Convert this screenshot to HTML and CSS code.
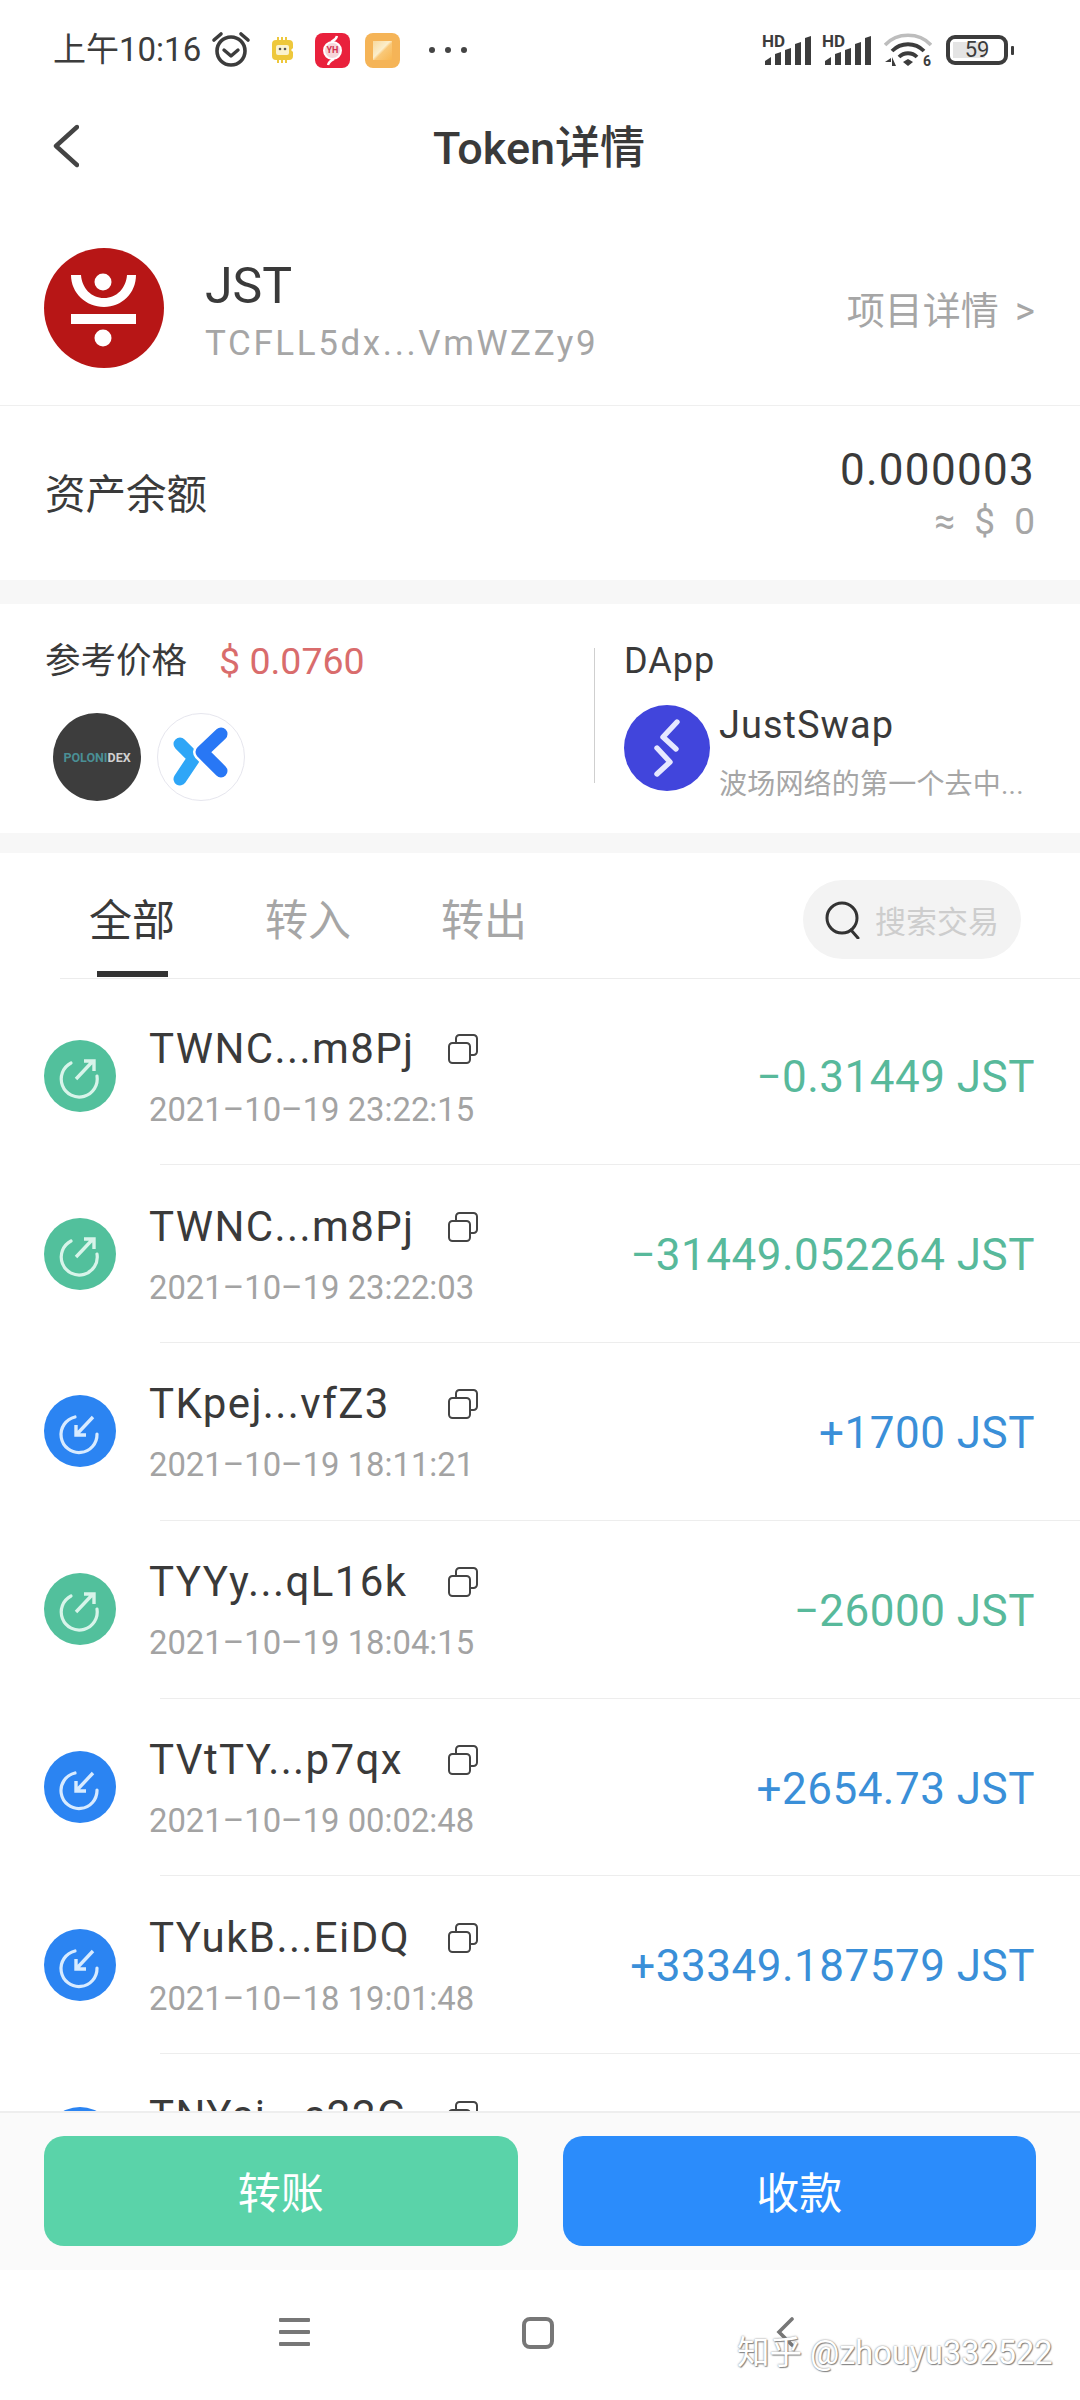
FILE: index.html
```html
<!DOCTYPE html>
<html lang="zh-CN">
<head>
<meta charset="UTF-8"/>
<meta name="viewport" content="width=device-width, initial-scale=1.0"/>
<title>Token详情</title>
<link rel="stylesheet" href="styles.css">
</head>
<body>
<div class="page">

    <!-- status bar -->
    <div class="status">
        <span class="time">上午10:16</span>
        <svg class="ic-alarm" viewBox="0 0 40 36" fill="none" stroke="#3c3c3c">
            <circle cx="20" cy="20" r="14" stroke-width="3.6"/>
            <path d="M13 19l7 6 7-6" stroke-width="3.4" stroke-linecap="round" stroke-linejoin="round"/>
            <path d="M3 9l7-6M37 9l-7-6" stroke-width="3.6" stroke-linecap="round"/>
        </svg>
        <svg class="ic-chip" viewBox="0 0 24 26">
            <path d="M6 0h2v3h2V0h2v3h2V0h2v3h2a4 4 0 0 1 4 4v4l-2 2 2 2v4a4 4 0 0 1-4 4h-2v3h-2v-3h-2v3h-2v-3H8v3H6v-3H5a4 4 0 0 1-4-4V7a4 4 0 0 1 4-4h1z" fill="#eec83c"/>
            <rect x="5" y="8" width="13" height="10" rx="2" fill="#fbf3cf"/>
            <circle cx="9" cy="12" r="1.3" fill="#555"/><circle cx="14" cy="12" r="1.3" fill="#555"/>
        </svg>
        <div class="ic-app ic-app-red">
            <svg class="ic-app-art" viewBox="0 0 35 35">
                <circle cx="17.5" cy="17.5" r="8.5" fill="#f6d5da" stroke="#fff" stroke-width="2"/>
                <path d="M22 3c-1 4-4 5-6 6M13 32c1-4 4-5 6-6" stroke="#fff" stroke-width="2.4" fill="none"/>
            </svg>
            <span class="ic-yh">YH</span>
        </div>
        <svg class="ic-app ic-app-last" viewBox="0 0 35 35">
            <defs>
                <linearGradient id="noteFill" x1="0" y1="0" x2="1" y2="1">
                    <stop offset="0" stop-color="#f8d99c"/><stop offset="0.45" stop-color="#fbeecb"/><stop offset="0.55" stop-color="#f9c878"/><stop offset="1" stop-color="#f8b650"/>
                </linearGradient>
            </defs>
            <rect width="35" height="35" rx="8" fill="#f5b457"/>
            <rect x="8" y="8" width="19" height="19" fill="url(#noteFill)"/>
        </svg>
        <span class="dots"><i></i><i></i><i></i></span>

        <div class="status-right">
            <div class="signal">
                <span class="signal-hd">HD</span>
                <svg class="signal-bars" viewBox="0 0 50 32">
                    <path d="M3 31v-4l6-4v8zM13 31V20l6-2v13zM23 31V16l6-2v17zM33 31V10l6-2v23zM43 31V4l6-2v29z" fill="#3c3c3c"/>
                </svg>
            </div>
            <div class="signal">
                <span class="signal-hd">HD</span>
                <svg class="signal-bars" viewBox="0 0 50 32">
                    <path d="M3 31v-4l6-4v8zM13 31V20l6-2v13zM23 31V16l6-2v17zM33 31V10l6-2v23zM43 31V4l6-2v29z" fill="#3c3c3c"/>
                </svg>
            </div>
            <div class="wifi">
                <svg class="wifi-art" viewBox="0 0 48 34" fill="none">
                    <path d="M1 12C13 -1 35 -1 47 12" stroke="#bdbdbd" stroke-width="3.6"/>
                    <path d="M8 18c9-9 23-9 32 0" stroke="#3c3c3c" stroke-width="3.8"/>
                    <path d="M15 24c5-5 13-5 18 0" stroke="#3c3c3c" stroke-width="3.8"/>
                    <path d="M19 29l5-3 5 3-5 4z" fill="#3c3c3c"/>
                    <path d="M1 29h6v-4zM8 33v-9l4 9z" fill="#3c3c3c"/>
                </svg>
                <span class="wifi-six">6</span>
            </div>
            <div class="battery">
                <div class="battery-box"><span class="battery-fill"></span><span class="battery-num">59</span></div>
                <span class="battery-nub"></span>
            </div>
        </div>
    </div>

    <!-- title -->
    <div class="nav">
        <svg class="nav-back" viewBox="0 0 26 44" fill="none" stroke="#444" stroke-width="4.4" stroke-linecap="round" stroke-linejoin="round">
            <path d="M24 3L3 22l21 19"/>
        </svg>
        <div class="nav-title">Token详情</div>
    </div>

    <!-- token -->
    <div class="token">
        <svg class="token-logo" viewBox="0 0 120 120">
            <circle cx="60" cy="60" r="60" fill="#b71616"/>
            <circle cx="59" cy="34" r="8.5" fill="#fff"/>
            <path d="M27 27H37C38 40 47 50 60 50C73 50 82 40 83 27H92C92 45 78 59 60 59C42 59 27 45 27 27Z" fill="#fff"/>
            <rect x="27" y="66" width="65" height="10" fill="#fff"/>
            <circle cx="59" cy="90" r="8.5" fill="#fff"/>
        </svg>
        <div class="token-info">
            <div class="token-name">JST</div>
            <div class="token-addr">TCFLL5dx...VmWZZy9</div>
        </div>
        <div class="token-link">项目详情 &gt;</div>
    </div>

    <div class="balance">
        <div class="balance-label">资产余额</div>
        <div class="balance-nums">
            <div class="balance-val">0.000003</div>
            <div class="balance-usd">≈ $ 0</div>
        </div>
    </div>

    <div class="gap gap-a"></div>

    <!-- price and dapp -->
    <div class="market">
        <div class="price">
            <div class="price-head"><span class="price-label">参考价格</span><span class="price-val">$ 0.0760</span></div>
            <div class="dex-list">
                <div class="dex dex-polo"><span class="polo-a">POLONI</span><span class="polo-b">DEX</span></div>
                <div class="dex dex-x">
                    <svg viewBox="0 0 88 88" fill="none" stroke-linecap="round" stroke-linejoin="round">
                        <path d="M23 31L37 45 23 66" stroke="#2ea6f7" stroke-width="13"/>
                        <path d="M64 21L45 39l19 19" stroke="#fff" stroke-width="18" stroke-linecap="butt"/>
                        <path d="M64 21L45 39l19 19" stroke="#2877f5" stroke-width="13"/>
                    </svg>
                </div>
            </div>
        </div>
        <div class="dapp">
            <div class="dapp-title">DApp</div>
            <div class="dapp-item">
                <svg class="dapp-logo" viewBox="0 0 86 86" fill="none" stroke="#e6e8ff" stroke-width="5.4" stroke-linecap="round" stroke-linejoin="round">
                    <circle cx="43" cy="43" r="43" fill="#4145dc" stroke="none"/>
                    <path d="M53 17L39 32l13 12"/>
                    <path d="M33 43l13 14-13 12"/>
                </svg>
                <div class="dapp-text">
                    <div class="dapp-name">JustSwap</div>
                    <div class="dapp-desc">波场网络的第一个去中...</div>
                </div>
            </div>
        </div>
    </div>

    <div class="gap gap-b"></div>

    <!-- tabs -->
    <div class="tabs">
        <div class="tab tab-on">全部<i class="tab-bar"></i></div>
        <div class="tab">转入</div>
        <div class="tab">转出</div>
        <div class="search">
            <svg class="search-ic" viewBox="0 0 38 38" fill="none" stroke="#333" stroke-width="3" stroke-linecap="round">
                <circle cx="18" cy="17" r="15"/>
                <path d="M27 29l7 8"/>
            </svg>
            <span class="search-txt">搜索交易</span>
        </div>
    </div>

    <!-- records -->
    <div class="list">
        <div class="row">
            <div class="row-main">
                <svg class="dir" viewBox="0 0 72 72"><use href="#dir-out"/></svg>
                <div class="row-info">
                    <div class="row-top"><span class="row-name">TWNC...m8Pj</span><svg class="copy" viewBox="0 0 30 30"><use href="#copy"/></svg></div>
                    <div class="row-date">2021–10–19 23:22:15</div>
                </div>
                <div class="amt amt-out">−0.31449 JST</div>
            </div>
        </div>
        <div class="row">
            <div class="row-main">
                <svg class="dir" viewBox="0 0 72 72"><use href="#dir-out"/></svg>
                <div class="row-info">
                    <div class="row-top"><span class="row-name">TWNC...m8Pj</span><svg class="copy" viewBox="0 0 30 30"><use href="#copy"/></svg></div>
                    <div class="row-date">2021–10–19 23:22:03</div>
                </div>
                <div class="amt amt-out">−31449.052264 JST</div>
            </div>
        </div>
        <div class="row">
            <div class="row-main">
                <svg class="dir" viewBox="0 0 72 72"><use href="#dir-in"/></svg>
                <div class="row-info">
                    <div class="row-top"><span class="row-name">TKpej...vfZ3</span><svg class="copy" viewBox="0 0 30 30"><use href="#copy"/></svg></div>
                    <div class="row-date">2021–10–19 18:11:21</div>
                </div>
                <div class="amt amt-in">+1700 JST</div>
            </div>
        </div>
        <div class="row">
            <div class="row-main">
                <svg class="dir" viewBox="0 0 72 72"><use href="#dir-out"/></svg>
                <div class="row-info">
                    <div class="row-top"><span class="row-name">TYYy...qL16k</span><svg class="copy" viewBox="0 0 30 30"><use href="#copy"/></svg></div>
                    <div class="row-date">2021–10–19 18:04:15</div>
                </div>
                <div class="amt amt-out">−26000 JST</div>
            </div>
        </div>
        <div class="row">
            <div class="row-main">
                <svg class="dir" viewBox="0 0 72 72"><use href="#dir-in"/></svg>
                <div class="row-info">
                    <div class="row-top"><span class="row-name">TVtTY...p7qx</span><svg class="copy" viewBox="0 0 30 30"><use href="#copy"/></svg></div>
                    <div class="row-date">2021–10–19 00:02:48</div>
                </div>
                <div class="amt amt-in">+2654.73 JST</div>
            </div>
        </div>
        <div class="row">
            <div class="row-main">
                <svg class="dir" viewBox="0 0 72 72"><use href="#dir-in"/></svg>
                <div class="row-info">
                    <div class="row-top"><span class="row-name">TYukB...EiDQ</span><svg class="copy" viewBox="0 0 30 30"><use href="#copy"/></svg></div>
                    <div class="row-date">2021–10–18 19:01:48</div>
                </div>
                <div class="amt amt-in">+33349.187579 JST</div>
            </div>
        </div>
        <div class="row">
            <div class="row-main">
                <svg class="dir" viewBox="0 0 72 72"><use href="#dir-in"/></svg>
                <div class="row-info">
                    <div class="row-top"><span class="row-name">TNYsi...s22G</span><svg class="copy" viewBox="0 0 30 30"><use href="#copy"/></svg></div>
                    <div class="row-date">&nbsp;</div>
                </div>
            </div>
        </div>
    </div>

    <!-- buttons -->
    <div class="actions">
        <div class="btn btn-send">转账</div>
        <div class="btn btn-recv">收款</div>
    </div>

    <!-- android keys -->
    <div class="keys">
        <svg class="key key-menu" viewBox="0 0 31 30" fill="#777"><rect y="1" width="31" height="4" rx="1"/><rect y="13" width="31" height="4" rx="1"/><rect y="25" width="31" height="4" rx="1"/></svg>
        <svg class="key key-home" viewBox="0 0 32 32" fill="none" stroke="#777" stroke-width="4"><rect x="2" y="2" width="28" height="28" rx="6"/></svg>
        <svg class="key key-back" viewBox="0 0 18 30" fill="none" stroke="#777" stroke-width="3.6" stroke-linecap="round"><path d="M16 2L3 15l13 13"/></svg>
        <div class="mark">知乎 @zhouyu332522</div>
    </div>
</div>

<!-- shared icons -->
<svg class="defs" width="0" height="0">
    <symbol id="dir-out" viewBox="0 0 72 72">
        <circle cx="36" cy="36" r="36" fill="#52c09c"/>
        <path d="M27 23A18 18 0 1 0 53 36" fill="none" stroke="#d8f4ea" stroke-width="3.2" stroke-linecap="round"/>
        <path d="M32 39L49 21M40 21h10v10" fill="none" stroke="#d8f4ea" stroke-width="3.4"/>
    </symbol>
    <symbol id="dir-in" viewBox="0 0 72 72">
        <circle cx="36" cy="36" r="36" fill="#2b84f2"/>
        <path d="M31 22A18 18 0 1 0 53 39" fill="none" stroke="#d8ebff" stroke-width="3.2" stroke-linecap="round"/>
        <path d="M49 22L33 39M32 30v10h10" fill="none" stroke="#d8ebff" stroke-width="3.4"/>
    </symbol>
    <symbol id="copy" viewBox="0 0 30 30">
        <rect x="1" y="9" width="21" height="20" rx="3.5" fill="#fff" stroke="#444" stroke-width="2"/>
        <path d="M8 9V4.500A3.500 3.500 0 0 1 11.500 1h14A3.500 3.500 0 0 1 29 4.500v13a3.500 3.500 0 0 1-3.500 3.500H22" fill="none" stroke="#444" stroke-width="2"/>
    </symbol>
</svg>
</body>
</html>
```

FILE: styles.css
```css
*{margin: 0; padding: 0; box-sizing: border-box}
html,body{width: 1080px; height: 2400px; background: #fff; overflow: hidden}
body{font-family: Roboto, "Noto Sans CJK SC", sans-serif; color: #3a3a3a}
.page{width: 1080px; height: 2400px; display: flex; flex-direction: column}
.defs{display: block}

/* status bar */
.status{height: 100px; flex: none; display: flex; align-items: center; padding: 0 66px 0 53px}
.time{font-size: 33px; line-height: 40px; width: 158px; color: #3c3c3c; white-space: nowrap}
.ic-alarm{width: 40px; height: 36px; margin: 0 20px 3px 0}
.ic-chip{width: 24px; height: 26px; margin-right: 20px}
.ic-app{width: 35px; height: 35px; margin-right: 15px; flex: none}
.ic-app-red{background: #e9213c; border-radius: 8px; display: flex; align-items: center; justify-content: center; position: relative}
.ic-app-art{position: absolute; left: 0; top: 0; width: 35px; height: 35px}
.ic-yh{position: relative; font-size: 9px; line-height: 10px; font-weight: 700; color: #d3304e}
.ic-app-last{margin-right: 29px}
.dots{display: flex; gap: 10px}
.dots i{width: 6px; height: 6px; border-radius: 50%; background: #444}
.status-right{margin-left: auto; display: flex; align-items: center}
.signal{width: 50px; height: 32px; margin-right: 10px; position: relative}
.signal-bars{display: block; width: 50px; height: 32px}
.signal-hd{position: absolute; left: 0; top: 0; font-size: 17px; line-height: 14px; font-weight: 700; color: #3c3c3c}
.wifi{width: 48px; height: 34px; margin: 0 14px 0 2px; position: relative}
.wifi-art{display: block; width: 48px; height: 34px}
.wifi-six{position: absolute; right: 1px; bottom: 0; font-size: 14px; line-height: 12px; font-weight: 700; color: #3c3c3c}
.battery{display: flex; align-items: center; gap: 3px}
.battery-box{width: 62px; height: 30px; border: 4px solid #3c3c3c; border-radius: 9px; position: relative; display: flex; align-items: center; justify-content: center}
.battery-fill{position: absolute; left: 3px; top: 3px; bottom: 3px; width: 32px; background: #e4e4e4}
.battery-num{position: relative; font-size: 22px; line-height: 22px; color: #3c3c3c}
.battery-nub{width: 3px; height: 9px; background: #3c3c3c; border-radius: 1px}

/* title */
.nav{height: 92px; flex: none; display: flex; align-items: center; padding-left: 53px}
.nav-back{width: 26px; height: 44px; flex: none}
.nav-title{flex: 1; text-align: center; font-size: 45px; font-weight: 500; padding: 0 81px 3px 0; color: #3a3a3a}

/* token */
.token{height: 214px; flex: none; display: flex; align-items: flex-start; padding: 56px 45px 0 44px; border-bottom: 1px solid #efefef}
.token-logo{width: 120px; height: 120px; flex: none}
.token-info{margin-left: 41px; flex: 1}
.token-name{font-size: 50px; line-height: 60px; margin-top: 8px}
.token-addr{font-size: 35px; line-height: 42px; margin-top: 7px; color: #a6a6a6; letter-spacing: 2.600px}
.token-link{font-size: 38px; line-height: 46px; margin-top: 40px; color: #a6a6a6; word-spacing: 7px}

.balance{height: 174px; flex: none; display: flex; align-items: center; padding: 0 45px 3px 45px}
.balance-label{flex: 1; font-size: 40.500px}
.balance-nums{text-align: right; padding-top: 3px}
.balance-val{font-size: 44px; line-height: 54px; letter-spacing: 1.300px}
.balance-usd{font-size: 37px; line-height: 44px; margin-top: 3px; color: #a6a6a6; word-spacing: 10px}

.gap{background: #f7f7f7; flex: none}
.gap-a{height: 24px}
.gap-b{height: 20px}

/* price and dapp */
.market{height: 229px; flex: none; display: flex; padding-top: 42px}
.price{width: 594px; padding-left: 45px; flex: none}
.price-head{display: flex; align-items: center; height: 36px}
.price-label{font-size: 35.500px; margin-bottom: 13px}
.price-val{font-size: 37.500px; color: #d96c6c; margin: 0 0 6px 32px}
.dex-list{display: flex; gap: 16px; margin: 31px 0 0 8px}
.dex{width: 88px; height: 88px; border-radius: 50%; display: flex; align-items: center; justify-content: center}
.dex-polo{background: #3d3d3d; font-size: 12.500px; font-weight: 700; white-space: nowrap}
.polo-a{color: #4a8f95}
.polo-b{color: #d0d0d0}
.dex-x{background: #fff; border: 1px solid #e6e6ee}
.dex-x svg{width: 88px; height: 88px; flex: none}
.dapp{flex: 1; height: 135px; margin-top: 2px; border-left: 1px solid #cfcfcf; padding-left: 29px}
.dapp-title{font-size: 36px; line-height: 30px; margin-top: -2px; letter-spacing: 1px}
.dapp-item{display: flex; margin-top: 29px}
.dapp-logo{width: 86px; height: 86px; flex: none}
.dapp-text{margin-left: 9px}
.dapp-name{font-size: 38px; line-height: 46px; margin-top: -3px; letter-spacing: 1px}
.dapp-desc{font-size: 28px; line-height: 34px; margin-top: 20px; color: #a6a6a6; white-space: nowrap; letter-spacing: 0.200px}

/* tabs */
.tabs{height: 126px; flex: none; margin-left: 60px; padding-left: 29px; display: flex; border-bottom: 1px solid #ececec}
.tab{width: 86px; margin-right: 90px; padding-top: 44px; font-size: 43px; line-height: 48px; color: #a6a6a6; white-space: nowrap; display: flex; flex-direction: column; align-items: center}
.tab-on{color: #3a3a3a}
.tab-bar{display: block; width: 71px; height: 6px; margin-top: 26px; background: #333}
.search{width: 218px; height: 79px; margin: 27px 59px 0 auto; padding-left: 21px; background: #f3f3f3; border-radius: 40px; display: flex; align-items: center; overflow: hidden}
.search-ic{width: 38px; height: 38px; flex: none}
.search-txt{margin-left: 13px; font-size: 31px; color: #cdcdcd; white-space: nowrap}

/* records */
.list{flex: 1; overflow: hidden; padding-top: 8.500px}
.row::after{content: ""; display: block; height: 1px; margin-left: 160px; background: #ededed}
.row-main{height: 176.800px; display: flex; align-items: center; padding: 0 45px 0 44px}
.dir{width: 72px; height: 72px; flex: none}
.row-info{margin-left: 33px; padding-top: 3px; flex: 1}
.row-top{display: flex; align-items: center; height: 48px}
.row-name{width: 299px; font-size: 42px; line-height: 48px; color: #3a3a3a; letter-spacing: 1.400px; white-space: nowrap}
.copy{width: 30px; height: 30px; flex: none}
.row-date{font-size: 32.800px; line-height: 40px; margin-top: 17px; color: #a3a3a3}
.amt{font-size: 44px; padding-top: 3px; white-space: nowrap; letter-spacing: 0.500px}
.amt-out{color: #58b99b}
.amt-in{color: #3a8fd8}

/* buttons */
.actions{height: 159px; flex: none; display: flex; gap: 45px; padding: 23px 44px 0; background: #fafafa; border-top: 2px solid #eeeeee}
.btn{flex: 1; height: 110px; border-radius: 20px; color: #fff; font-size: 43px; padding-bottom: 2px; display: flex; align-items: center; justify-content: center}
.btn-send{background: #5ad3a9}
.btn-recv{background: #2b8cfb}

/* android keys */
.keys{height: 130px; flex: none; background: #fff; position: relative; display: flex; align-items: flex-start; padding: 47px 0 0 279px}
.key-menu{width: 31px; height: 30px}
.key-home{width: 32px; height: 32px; margin-left: 212px}
.key-back{width: 18px; height: 30px; margin-left: 222px}
.mark{position: absolute; left: 737px; top: 63px; font-size: 32.500px; line-height: 40px; color: #fff; white-space: nowrap; text-shadow: 0 0 2px #777, 1px 1px 1px #888}
```
